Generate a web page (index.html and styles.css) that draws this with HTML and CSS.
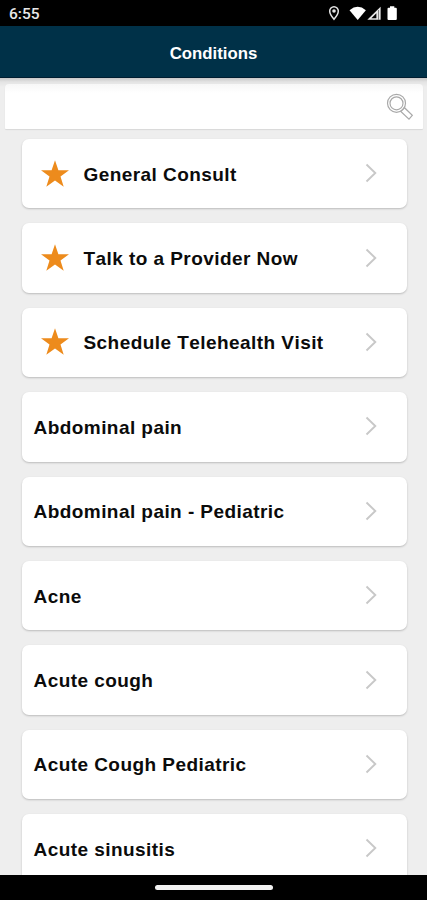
FILE: index.html
```html
<!DOCTYPE html>
<html lang="en">
<head>
<meta charset="utf-8">
<title>Conditions</title>
<link rel="stylesheet" href="styles.css">
</head>
<body>
<svg width="0" height="0" class="defs">
  <symbol id="star" viewBox="0 0 28 28"><path d="M14 .3 17.4 10.200H28L19.500 16.500 22.700 26.800 14 20.600 5.300 26.800 8.500 16.500 0 10.200H10.600Z" fill="#ed8b1c"/></symbol>
  <symbol id="chevron" viewBox="0 0 12 20"><path d="M1.500 1.500 10.300 10 1.500 18.500" fill="none" stroke="#c8c8c8" stroke-width="1.900"/></symbol>
</svg>
<div class="screen">
  <div class="status">
    <span class="time">6:55</span>
    <svg class="status-icons" width="72" height="18" viewBox="0 0 72 18">
      <path d="M6 2.700a4.300 4.300 0 0 0-4.300 4.400C1.700 10.500 6 15.300 6 15.300s4.300-4.800 4.300-8.200A4.300 4.300 0 0 0 6 2.700Z" fill="none" stroke="#e4e4e4" stroke-width="1.500"/>
      <circle cx="6" cy="7" r="1.800" fill="#e4e4e4"/>
      <path d="M21.500 6.200Q29.700-.6 37.900 6.200L29.700 16Z" fill="#fff"/>
      <path d="M52.600 2.800V15.800H39.300Z" fill="#e8e8e8"/>
      <path d="M48.400 9.200V14.300H43.400Z" fill="#000"/>
      <path d="M50.500 6v9.800" stroke="#555" stroke-width=".7"/>
      <path d="M62 2.200h4.300v1.500h1.500q1 0 1 1v10.200q0 1-1 1h-7.300q-1 0-1-1V4.700q0-1 1-1H62Z" fill="#fff"/>
    </svg>
  </div>
  <header class="header">Conditions</header>
  <main class="content">
    <div class="search">
      <svg width="28" height="28" viewBox="0 0 28 28" fill="none" stroke="#a9a9a9" stroke-width="1.200">
        <circle cx="10.500" cy="10.300" r="9"/>
        <circle cx="10.500" cy="10.300" r="6.500"/>
        <path d="M14.800 18.400 18.500 14.700 26.300 22.400 23 26.200Z"/>
      </svg>
    </div>
    <div class="list">
      <div class="card starred"><svg class="star"><use href="#star"/></svg><span>General Consult</span><svg class="chev"><use href="#chevron"/></svg></div>
      <div class="card starred"><svg class="star"><use href="#star"/></svg><span>Talk to a Provider Now</span><svg class="chev"><use href="#chevron"/></svg></div>
      <div class="card starred"><svg class="star"><use href="#star"/></svg><span>Schedule Telehealth Visit</span><svg class="chev"><use href="#chevron"/></svg></div>
      <div class="card"><span>Abdominal pain</span><svg class="chev"><use href="#chevron"/></svg></div>
      <div class="card"><span>Abdominal pain - Pediatric</span><svg class="chev"><use href="#chevron"/></svg></div>
      <div class="card"><span>Acne</span><svg class="chev"><use href="#chevron"/></svg></div>
      <div class="card"><span>Acute cough</span><svg class="chev"><use href="#chevron"/></svg></div>
      <div class="card"><span>Acute Cough Pediatric</span><svg class="chev"><use href="#chevron"/></svg></div>
      <div class="card"><span>Acute sinusitis</span><svg class="chev"><use href="#chevron"/></svg></div>
    </div>
  </main>
  <div class="navbar"><div class="handle"></div></div>
</div>
</body>
</html>
```
FILE: styles.css
```css
* { box-sizing: border-box; }
body { margin: 0; background: #000; }
.defs { display: none; }
.screen {
  width: 427px;
  height: 900px;
  display: flex;
  flex-direction: column;
  overflow: hidden;
  font-family: "Liberation Sans", Arial, sans-serif;
  font-weight: 700;
  font-kerning: none;
}
.status {
  height: 26px;
  flex: none;
  display: flex;
  justify-content: space-between;
  align-items: center;
  padding: 2px 27px 0 9px;
  background: #000;
  color: #e8e8e8;
}
.time { font: 500 15.5px/20px Roboto, sans-serif; }
.status-icons { margin-top: -2px; }
.header {
  height: 52px;
  flex: none;
  background: #003148;
  border-bottom: 1px solid #001d30;
  color: #fff;
  font-size: 16.8px;
  line-height: 55px;
  text-align: center;
}
.content {
  flex: 1;
  min-height: 0;
  overflow: hidden;
  background: linear-gradient(#c9c9c9, #e4e4e4 4px, #eee 9px);
}
.search {
  height: 45px;
  margin: 6px 4px 0 5px;
  padding: 9px 9px 0 0;
  display: flex;
  justify-content: flex-end;
  border-radius: 4px 4px 1px 1px;
  background: linear-gradient(#f7f7f7, #fff 9px);
  box-shadow: 0 1px 1px #d8d8d8;
}
.list {
  padding: 10px 20.5px 0 21.5px;
  display: flex;
  flex-direction: column;
  gap: 15px;
}
.card {
  height: 69.4px;
  flex: none;
  display: flex;
  align-items: center;
  padding: 0 30px 0 12px;
  border-radius: 7px;
  background: #fff;
  box-shadow: 0 1px 2px #bbb;
  color: #0b0b0b;
  font-size: 19px;
  line-height: 24px;
  letter-spacing: .44px;
  white-space: nowrap;
}
.card span { padding-top: 2px; }
.starred { padding-left: 19px; }
.star { width: 28px; height: 28px; margin-right: 15px; }
.chev { width: 12px; height: 20px; margin: -1px 0 0 auto; }
.navbar {
  height: 25px;
  flex: none;
  display: flex;
  justify-content: center;
  padding-top: 10px;
  background: #000;
}
.handle { width: 118px; height: 5px; border-radius: 3px; background: #f2f2f2; }
```
